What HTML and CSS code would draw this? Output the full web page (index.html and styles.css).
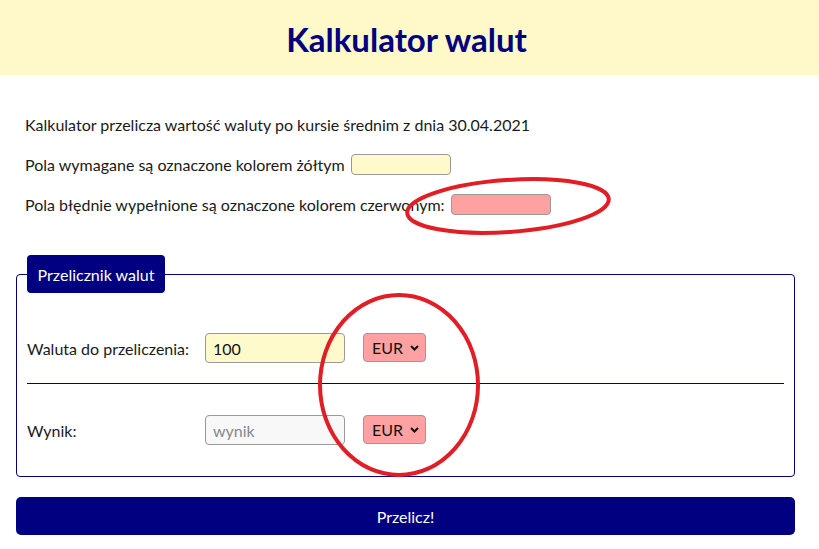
FILE: index.html
```html
<!DOCTYPE html>
<html lang="pl">
<head>
<meta charset="utf-8">
<title>Kalkulator walut</title>
<link rel="stylesheet" href="styles.css">
</head>
<body>
<header class="banner">
  <h1 class="title">Kalkulator walut</h1>
</header>
<main class="page">
  <section class="intro">
    <p class="intro-row">Kalkulator przelicza wartość waluty po kursie średnim z dnia 30.04.2021</p>
    <p class="intro-row">Pola wymagane są oznaczone kolorem żółtym <span class="swatch swatch-required"></span></p>
    <p class="intro-row">Pola błędnie wypełnione są oznaczone kolorem czerwonym: <span class="swatch swatch-error"></span></p>
  </section>
  <form class="calc" onsubmit="return false">
    <fieldset class="box">
      <legend class="box-legend">Przelicznik walut</legend>
      <div class="field-row first">
        <label class="field-label" for="amount">Waluta do przeliczenia:</label>
        <input class="field-input required" id="amount" type="text" value="100">
        <span class="select-wrap">
          <select class="field-select error"><option>EUR</option></select>
          <svg class="chevron" width="9" height="6" viewBox="0 0 9 6"><path d="M1 1 L4.5 4.5 L8 1" fill="none" stroke="#111" stroke-width="2"/></svg>
        </span>
      </div>
      <hr class="divider">
      <div class="field-row">
        <label class="field-label" for="result">Wynik:</label>
        <input class="field-input readonly" id="result" type="text" placeholder="wynik" readonly>
        <span class="select-wrap">
          <select class="field-select error"><option>EUR</option></select>
          <svg class="chevron" width="9" height="6" viewBox="0 0 9 6"><path d="M1 1 L4.5 4.5 L8 1" fill="none" stroke="#111" stroke-width="2"/></svg>
        </span>
      </div>
    </fieldset>
    <button class="submit" type="submit">Przelicz!</button>
  </form>
</main>
<svg class="annotations" width="819" height="549" viewBox="0 0 819 549">
  <ellipse cx="508" cy="206" rx="101" ry="26" transform="rotate(-4 508 206)" fill="none" stroke="#e11d25" stroke-width="4"/>
  <ellipse cx="399" cy="385" rx="79" ry="90" fill="none" stroke="#e11d25" stroke-width="4"/>
</svg>
</body>
</html>
```
FILE: styles.css
```css
* { box-sizing: border-box; }
html, body { margin: 0; padding: 0; }
body {
  font-family: Lato, "Open Sans", sans-serif;
  font-size: 16px;
  color: #1a1a1a;
  background: #fff;
  position: relative;
  width: 819px;
  height: 549px;
  overflow: hidden;
}
.banner {
  height: 75px;
  background: #fff8c9;
  display: flex;
  align-items: center;
  justify-content: center;
  padding-right: 6px;
}
.title {
  margin: 0;
  font-size: 33px;
  font-weight: 700;
  color: #000080;
  padding-top: 2px;
}
.page {
  padding: 29px 24px 0 16px;
}
.intro {
  padding-left: 9px;
  display: flex;
  flex-direction: column;
}
.intro-row {
  margin: 0;
  height: 40px;
  display: flex;
  align-items: center;
  gap: 6px;
}
.swatch {
  display: inline-block;
  width: 100px;
  height: 21px;
  border: 1px solid #999;
  border-radius: 4px;
}
.swatch-required { background: #fffacc; }
.swatch-error { background: #ffa1a1; }
.calc {
  margin-top: 31px;
}
.box {
  margin: 0;
  border: 1px solid #000080;
  border-radius: 4px;
  padding: 0 10px 31px;
  min-width: 0;
}
.box-legend {
  background: #000080;
  color: #fff;
  height: 38px;
  width: 138px;
  border-radius: 4px;
  padding: 0;
  display: flex;
  align-items: center;
  justify-content: center;
  font-size: 16px;
}
.field-row {
  display: flex;
  align-items: center;
  height: 30px;
}
.field-row.first { margin-top: 40px; }
.field-label {
  width: 178px;
  flex: none;
}
.field-input {
  width: 140px;
  height: 30px;
  border: 1px solid #9a9a9a;
  border-radius: 4px;
  padding: 0 7px;
  font: inherit;
  font-size: 16px;
  color: #111;
}
.field-input.required { background: #fffacc; }
.field-input.readonly { background: #f8f8f8; }
.field-input::placeholder { color: #888; }
.select-wrap {
  position: relative;
  margin-left: 18px;
  display: inline-block;
  height: 29px;
  margin-top: -1px;
}
.field-select {
  appearance: none;
  -webkit-appearance: none;
  width: 63px;
  height: 29px;
  border: 1px solid #9a9a9a;
  border-radius: 4px;
  background: #ffa1a1;
  font: inherit;
  font-size: 16px;
  color: #111;
  padding: 0 0 0 8px;
}
.chevron {
  position: absolute;
  left: 47px;
  top: 12px;
  pointer-events: none;
}
.divider {
  margin: 20px 0 31px;
  border: 0;
  border-top: 1px solid #000080;
  height: 0;
}
.submit {
  display: block;
  width: 100%;
  margin-top: 20px;
  height: 38px;
  border: 0;
  border-radius: 5px;
  background: #000080;
  color: #fff;
  font: inherit;
  font-size: 16px;
}
.annotations {
  position: absolute;
  left: 0;
  top: 0;
  pointer-events: none;
}
```
